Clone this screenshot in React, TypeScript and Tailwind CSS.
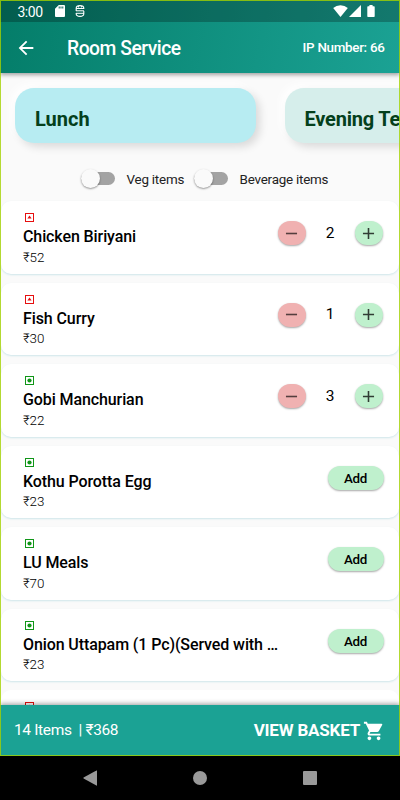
import React, { useState } from "react";
import { MdAdd, MdArrowBack, MdRemove, MdShoppingCart } from "react-icons/md";

interface Item {
  name: string;
  price: number;
  veg: boolean;
  count: number;
}

const items: Item[] = [
  { name: "Chicken Biriyani", price: 52, veg: false, count: 2 },
  { name: "Fish Curry", price: 30, veg: false, count: 1 },
  { name: "Gobi Manchurian", price: 22, veg: true, count: 3 },
  { name: "Kothu Porotta Egg", price: 23, veg: true, count: 0 },
  { name: "LU Meals", price: 70, veg: true, count: 0 },
  { name: "Onion Uttapam (1 Pc)(Served with Sambar)", price: 23, veg: true, count: 0 },
];

const StatusBar = () => (
  <div className="flex h-[22px] shrink-0 items-center justify-between bg-black/25 pl-[17.5px] pr-[25px] text-white">
    <div className="flex items-center">
      <span className="w-[37px] pt-px text-[14px] leading-[22px] tracking-[-0.5px]">3:00</span>
      <svg width="10" height="12" viewBox="0 0 10 12" className="block">
        <path
          fill="currentColor"
          fillRule="evenodd"
          d="M3.8 0H9q1 0 1 1v10q0 1-1 1H1q-1 0-1-1V3.8zM3.7 1.6v2h1v-2zm1.8 0v2h1v-2zm1.8 0v2h1v-2z"
        />
      </svg>
      <svg width="10" height="12" viewBox="0 0 10 12" className="ml-[10.5px] block" fill="none" stroke="currentColor">
        <path strokeWidth="1.1" d="M1.2 6V3.2Q1.2.6 5 .6t3.8 2.6v.9M8.8 6v2.8q0 2.6-3.8 2.6T1.2 8.8v-.9" />
        <path strokeWidth="1" d="M1 3.5h8M1 5.8h8M1 8.3h8M3.6 1v1.5M6.4 1v1.5" />
      </svg>
    </div>
    <div className="flex items-center">
      <svg width="15" height="12" viewBox="0 0 15 12" fill="currentColor">
        <path d="M7.5 12 .2 3Q3.3.3 7.5.3T14.8 3z" />
      </svg>
      <svg width="12" height="12" viewBox="0 0 12 12" fill="currentColor" className="ml-px">
        <path d="M12 0v12H0z" />
      </svg>
      <svg width="8" height="12" viewBox="0 0 8 12" fill="currentColor" className="ml-[6px]">
        <path d="M2.4 0h3.2v1.2H7q.7 0 .7.7v9.4q0 .7-.7.7H1q-.7 0-.7-.7V1.9q0-.7.7-.7h1.4z" />
      </svg>
    </div>
  </div>
);

const Header = () => (
  <header className="relative z-10 h-[73px] shrink-0 bg-linear-[100deg,#047d69,#1ba294] text-white shadow-[0_2px_4px_rgba(0,0,0,0.35)]">
    <StatusBar />
    <div className="flex h-[51px] items-center pl-[15px] pr-[15.5px]">
      <MdArrowBack size={22} />
      <h1 className="ml-[30px] pt-[2px] text-[19.3px] font-medium leading-6 tracking-[-0.48px]">Room Service</h1>
      <span className="ml-auto pt-[2px] text-[13.4px] font-medium tracking-[-0.3px]">IP Number: 66</span>
    </div>
  </header>
);

const Toggle = ({ label }: { label: string }) => {
  const [on, setOn] = useState(false);
  return (
    <label className="flex items-center">
      <input type="checkbox" className="sr-only" checked={on} onChange={() => setOn(!on)} />
      <span
        className={
          on
            ? "mr-3 flex h-[13px] w-[33.5px] items-center justify-end rounded-full bg-[#1ba294]"
            : "mr-3 flex h-[13px] w-[33.5px] items-center rounded-full bg-[#a3a3a3]"
        }
      >
        <span className="-my-[3px] h-[19px] w-[19px] rounded-full bg-[#fafafa] shadow-[0_1px_2px_rgba(0,0,0,0.4)]" />
      </span>
      <span className="pt-[2px] text-[13.4px] tracking-[-0.22px] text-[#222]">{label}</span>
    </label>
  );
};

const FoodMark = ({ veg }: { veg: boolean }) => (
  <svg width="9" height="9" viewBox="0 0 9 9" className="ml-[2px] block" fill={veg ? "#109618" : "#e60f0f"}>
    <path fillRule="evenodd" d="M0 0h9v9H0zM1 1v7h7V1z" />
    {veg ? <circle cx="4.5" cy="4.5" r="2.1" /> : <path d="M4.5 2.6 6.6 5.6H2.4z" />}
  </svg>
);

const ItemCard = ({ item }: { item: Item }) => {
  const [count, setCount] = useState(item.count);
  return (
    <div className="flex h-[72.5px] shrink-0 justify-between rounded-[10px] bg-white pl-[22px] pr-[16.5px] shadow-[0_1px_2px_#cfe6ea]">
      <div className="w-[257px] pt-[12px]">
        <FoodMark veg={item.veg} />
        <p className="mt-[5px] truncate text-[16px] font-medium leading-5 tracking-[-0.1px] text-black">{item.name}</p>
        <p className="mt-[0.6px] text-[13.4px] font-light leading-5 text-black">₹{item.price}</p>
      </div>
      {count > 0 ? (
        <div className="mt-[20px] flex h-6 items-center">
          <button
            className="flex h-6 w-7 items-center justify-center rounded-full bg-[#f0b1b1] text-black/65 shadow-[0_1px_2px_rgba(0,0,0,0.35)]"
            onClick={() => setCount(count - 1)}
          >
            <MdRemove size={19} />
          </button>
          <span className="w-[49px] text-center text-[15.5px]">{count}</span>
          <button
            className="flex h-6 w-7 items-center justify-center rounded-full bg-[#bff0cd] text-black/75 shadow-[0_1px_2px_rgba(0,0,0,0.35)]"
            onClick={() => setCount(count + 1)}
          >
            <MdAdd size={19} />
          </button>
        </div>
      ) : (
        <button
          className="-mr-px mt-[20px] h-6 w-14 rounded-full bg-[#bff0cd] text-[13.4px] font-medium leading-[25px] tracking-[-0.3px] text-black shadow-[0_1px_2px_rgba(0,0,0,0.35)]"
          onClick={() => setCount(1)}
        >
          Add
        </button>
      )}
    </div>
  );
};

const BasketBar = () => (
  <div className="relative z-10 flex h-[51px] shrink-0 items-center bg-[#1ba294] pl-[14px] pr-[15px] text-white shadow-[0_-1px_5px_rgba(0,0,0,0.4)]">
    <span className="whitespace-pre text-[15.5px] tracking-[-0.35px]">{"14 Items  | ₹368"}</span>
    <span className="ml-auto text-[17px] font-bold tracking-[-0.2px]">VIEW BASKET</span>
    <MdShoppingCart size={22} className="ml-[3px]" />
  </div>
);

const NavBar = () => (
  <div className="flex h-[44px] shrink-0 items-center justify-between bg-black pl-[82.5px] pr-[83.5px] text-[#999]">
    <svg width="14" height="16" viewBox="0 0 14 16" fill="currentColor">
      <path d="M14 .8v14.4q0 .6-.6.4L.6 8.5Q0 8 .6 7.5L13.4.4q.6-.2.6.4z" />
    </svg>
    <span className="h-[14px] w-[14px] rounded-full bg-[#999]" />
    <span className="h-[14px] w-[14px] rounded-[1px] bg-[#999]" />
  </div>
);

const App = () => {
  return (
    <div className="relative flex h-[800px] w-[400px] flex-col overflow-hidden bg-[#fafafa] font-['Roboto',sans-serif]">
      <Header />
      <main className="flex min-h-0 flex-1 flex-col overflow-hidden">
        <div className="flex h-[70px] shrink-0 gap-[29px] pl-[15px] pt-[15px] text-[20px] font-bold leading-[63px] text-[#04401c]">
          <div className="h-[54.5px] w-[240.5px] shrink-0 rounded-[19px] bg-[#b7ecf2] pl-5 shadow-[4px_4px_8px_rgba(0,0,0,0.13),-4px_-4px_10px_#fff]">
            Lunch
          </div>
          <div className="h-[54.5px] w-[240.5px] shrink-0 rounded-[19px] bg-[#d6eeeb] pl-5 tracking-[-0.2px] shadow-[4px_4px_8px_rgba(0,0,0,0.13),-4px_-4px_10px_#fff]">
            Evening Tea
          </div>
        </div>
        <div className="mb-[4.3px] mt-[18px] flex h-9 shrink-0 items-center gap-[10px] pl-[81px]">
          <Toggle label="Veg items" />
          <Toggle label="Beverage items" />
        </div>
        <div className="flex flex-col gap-[9px] px-px">
          {items.map((item) => (
            <ItemCard key={item.name} item={item} />
          ))}
          {/* next card, only its top edge shows above the basket bar */}
          <div className="h-[72.5px] shrink-0 rounded-[10px] bg-white pl-[22px] pt-[12px]">
            <FoodMark veg={false} />
          </div>
        </div>
      </main>
      <BasketBar />
      <NavBar />
      <div className="pointer-events-none absolute inset-x-0 top-0 z-20 h-[756px] border border-[#a4d200]/80" />
    </div>
  );
};

export default App;
